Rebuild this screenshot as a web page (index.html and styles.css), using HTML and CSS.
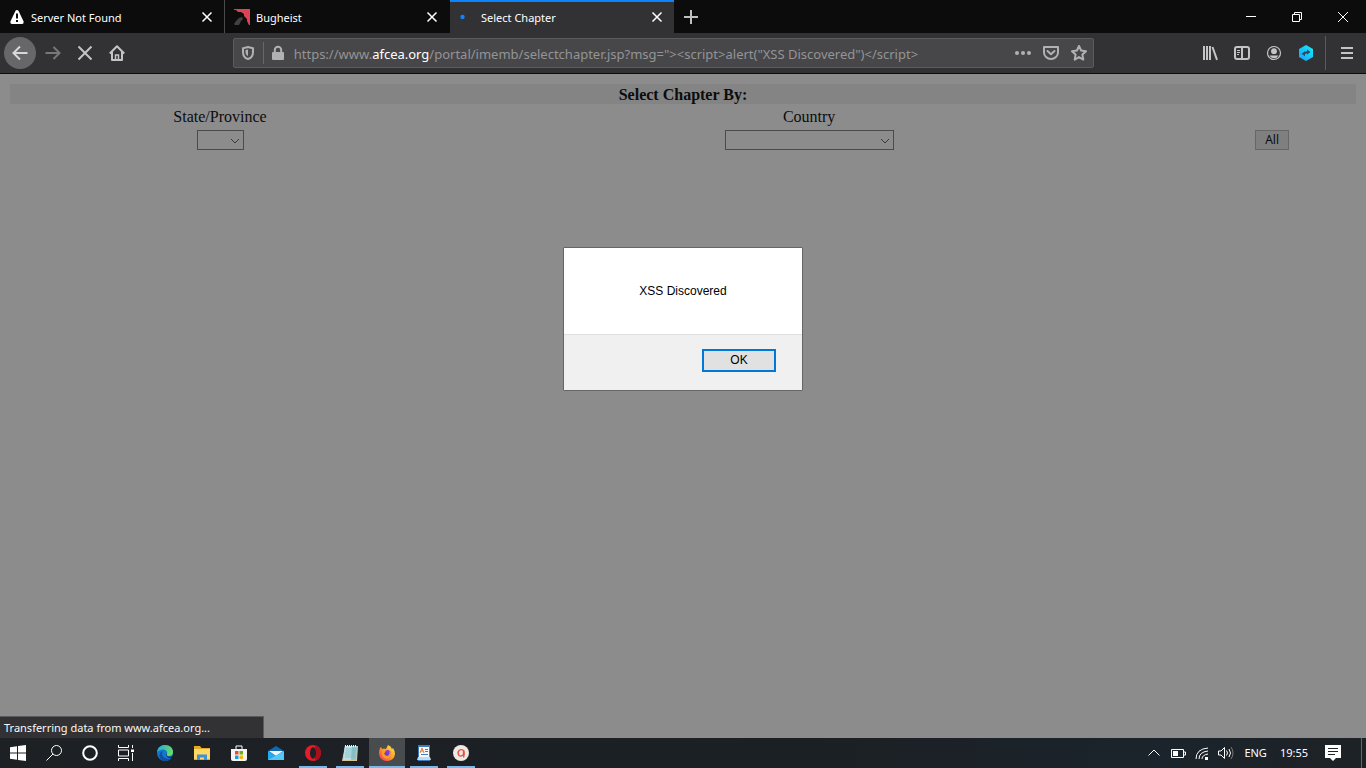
FILE: index.html
```
<!DOCTYPE html>
<html lang="en">
<head>
<meta charset="utf-8">
<title>Select Chapter</title>
<link rel="stylesheet" href="styles.css">
</head>
<body>
<header class="tabstrip">
  <div class="tab">
    <svg class="favicon" viewBox="0 0 16 16"><path d="M8 1 Q9 1 9.600 2 L14.600 12.500 Q15 15 13 15 H3 Q1 15 1.400 12.500 L6.400 2 Q7 1 8 1Z" fill="#fff"/><path d="M8 4.500v5M8 11v2" stroke="#0c0c0d" stroke-width="2"/></svg>
    <span class="tab-title">Server Not Found</span>
    <button class="tab-close" aria-label="Close tab"><svg viewBox="0 0 16 16"><path d="M3.500 3.500l9 9M12.500 3.500l-9 9"/></svg></button>
  </div>
  <div class="tab">
    <svg class="favicon" viewBox="0 0 16 16"><path d="M0 0H16V16H15L13 12V10L10 7V5L7 3H4L2 1H0Z" fill="#dc4455"/><path d="M0 15L2 12L5 9L8 8L9 10L7 12L5 16H1Z" fill="#414142"/></svg>
    <span class="tab-title">Bugheist</span>
    <button class="tab-close" aria-label="Close tab"><svg viewBox="0 0 16 16"><path d="M3.500 3.500l9 9M12.500 3.500l-9 9"/></svg></button>
  </div>
  <div class="tab tab-active">
    <svg class="favicon" viewBox="0 0 16 16"><circle cx="3.500" cy="8" r="2.200" fill="#0a84ff"/></svg>
    <span class="tab-title">Select Chapter</span>
    <button class="tab-close" aria-label="Close tab"><svg viewBox="0 0 16 16"><path d="M3.500 3.500l9 9M12.500 3.500l-9 9"/></svg></button>
  </div>
  <button class="new-tab" aria-label="New tab"><svg viewBox="0 0 16 16"><path d="M8 1v14M1 8h14"/></svg></button>
  <div class="window-controls">
    <button aria-label="Minimize"><svg viewBox="0 0 16 16"><path d="M3 7.500h10"/></svg></button>
    <button aria-label="Restore"><svg viewBox="0 0 16 16"><path d="M3.500 5.500h7v7h-7zM5.500 5.500v-2h7v7h-2"/></svg></button>
    <button aria-label="Close"><svg viewBox="0 0 16 16"><path d="M3 3l10 10M13 3L3 13"/></svg></button>
  </div>
</header>

<nav class="toolbar">
  <button class="tool back" aria-label="Back"><svg viewBox="0 0 16 16"><path d="M15.500 8H1.500M8 1.500L1.500 8L8 14.500"/></svg></button>
  <button class="tool dim" aria-label="Forward"><svg viewBox="0 0 16 16"><path d="M.500 8h14M8.500 2l6 6l-6 6"/></svg></button>
  <button class="tool" aria-label="Stop"><svg viewBox="0 0 16 16"><path d="M1.500 1.500l13 13M14.500 1.500l-13 13"/></svg></button>
  <button class="tool" aria-label="Home"><svg viewBox="0 0 16 16"><path d="M.800 8.500L8 1.200l7.200 7.300M3 7v8h10V7" stroke-linejoin="round"/><path d="M6.500 15v-5h3v5" stroke-width="1.500"/></svg></button>
  <div class="spring"></div>
  <div class="urlbar">
    <svg class="ico" viewBox="0 0 16 16"><path d="M8 2L13 3.200V7c0 4-2 6.300-5 7C5 13.300 3 11 3 7V3.200Z"/><path d="M8 4.500V11C6.500 10.500 5.500 9 5.500 7V5Z" fill="#b1b1b3" stroke="none"/></svg>
    <span class="url-divider"></span>
    <svg class="ico lock" viewBox="0 0 16 16"><path d="M4.800 7V5a3.200 3.200 0 0 1 6.400 0v2"/><rect x="2" y="7" width="12" height="8" rx="1" fill="#b1b1b3" stroke="none"/></svg>
    <div class="url">https://www.<b>afcea.org</b>/portal/imemb/selectchapter.jsp?msg="&gt;&lt;script&gt;alert("XSS Discovered")&lt;/script&gt;</div>
    <svg class="ico" viewBox="0 0 16 16"><g fill="#b1b1b3" stroke="none"><circle cx="2" cy="8" r="2"/><circle cx="8" cy="8" r="2"/><circle cx="14" cy="8" r="2"/></g></svg>
    <svg class="ico" viewBox="0 0 16 16"><path d="M1 2h14v5.500a7 6.500 0 0 1-14 0ZM4.500 6L8 9.300L11.500 6" stroke-linejoin="round" stroke-linecap="round"/></svg>
    <svg class="ico" viewBox="0 0 16 16"><path d="M8 1l2.100 4.500 4.900.700-3.600 3.400.900 5-4.300-2.500-4.300 2.500.900-5L1 6.200l4.900-.700Z" stroke-linejoin="round"/></svg>
  </div>
  <div class="spring"></div>
  <button class="tool" aria-label="Library"><svg viewBox="0 0 16 16"><path d="M2 1v14M5 1v14M8 1v14M10.500 2l4.500 12.800"/></svg></button>
  <button class="tool" aria-label="Sidebars"><svg viewBox="0 0 16 16"><rect x="1" y="2" width="14" height="12" rx="2"/><path d="M8 2v12"/><path d="M3 5.500h3M3 7.500h3M3 9.500h2" stroke-width="1"/></svg></button>
  <button class="tool" aria-label="Account"><svg viewBox="0 0 16 16"><circle cx="8" cy="8" r="6.500" stroke-width="1.200"/><circle cx="8" cy="6.200" r="2.900" fill="#c4c4c6" stroke="none"/><path d="M3.500 10.500h9Q11 13.300 8 13.300T3.500 10.500Z" fill="#c4c4c6" stroke="none"/></svg></button>
  <button class="tool" aria-label="Extension"><svg viewBox="0 0 16 16"><defs><linearGradient id="cy" x1="0" y1="1" x2="1" y2="0"><stop offset="0" stop-color="#1a9dff"/><stop offset="1" stop-color="#13f0f5"/></linearGradient></defs><path d="M8 0L15 4V12L8 16L1 12V4Z" fill="url(#cy)" stroke="none"/><path d="M3.500 8.800L7 6.200v5ZM9 4.500v5L12.500 7Z" fill="#34485a" stroke="none"/><path d="M6 8.300l4-1.300" stroke="#34485a"/></svg></button>
  <span class="menu-divider"></span>
  <button class="tool" aria-label="Menu"><svg viewBox="0 0 16 16"><path d="M2 3h12M2 8h12M2 13h12"/></svg></button>
</nav>

<main class="page">
  <form class="chapter-form">
    <table class="chapters">
      <colgroup><col class="col-state"><col class="col-country"><col></colgroup>
      <tr class="heading"><th colspan="3">Select Chapter By:</th></tr>
      <tr class="labels"><td><label for="state">State/Province</label></td><td><label for="country">Country</label></td><td></td></tr>
      <tr>
        <td><span class="picker picker-small"><select id="state"><option></option></select><svg viewBox="0 0 10 6"><path d="M1 1l4 4l4-4"/></svg></span></td>
        <td><span class="picker"><select id="country"><option></option></select><svg viewBox="0 0 10 6"><path d="M1 1l4 4l4-4"/></svg></span></td>
        <td><button type="button" class="all">All</button></td>
      </tr>
    </table>
  </form>
  <div class="modal-layer">
    <section class="dialog" role="alertdialog" aria-labelledby="message">
      <p id="message">XSS Discovered</p>
      <div class="dialog-actions"><button>OK</button></div>
    </section>
  </div>
  <div class="status">Transferring data from www.afcea.org...</div>
</main>

<footer class="taskbar">
  <div class="system">
    <button class="task" aria-label="Start"><svg viewBox="0 0 16 16"><path d="M0 2.300L7 1.300V7.600H0ZM8 1.100L16 0V7.600H8ZM0 8.500H7V14.800L0 13.800ZM8 8.500H16V16L8 15Z" fill="#fff"/></svg></button>
    <button class="task" aria-label="Search"><svg viewBox="0 0 16 16" class="line"><circle cx="10.500" cy="5.500" r="5"/><path d="M7 9L.500 15.500"/></svg></button>
    <button class="task" aria-label="Cortana"><svg viewBox="0 0 16 16"><circle cx="8" cy="8" r="6.800" fill="none" stroke="#fff" stroke-width="2"/></svg></button>
    <button class="task" aria-label="Task view"><svg viewBox="0 0 16 16" class="line"><path d="M.500 0v2.500h10V0M.500 16v-2.500h10V16M.500 5h10v6H.500ZM14.500 0v3M14.500 8v8"/><path d="M13 4.500h3v2.500h-3z" fill="#fff" stroke="none"/></svg></button>
  </div>
  <div class="apps">
    <button class="task" aria-label="Edge"><svg viewBox="0 0 16 16"><defs><linearGradient id="ed" x1="0" y1="0" x2="1" y2=".500"><stop offset="0" stop-color="#25a6e5"/><stop offset="1" stop-color="#65df62"/></linearGradient></defs><circle cx="8" cy="8" r="8" fill="#1177d1"/><path d="M0 7C1 2 4 0 8 0c5 0 8 3 8 7 0 3-2 4-4 4-3 0-2.500-1-2-2 1-3-2-5-5-4.500C3 5 1 6 0 7Z" fill="url(#ed)"/><path d="M6 6c-3 4 1 9 8 7.300C11 17 5 17 3 13 1.500 10 3 7 6 6Z" fill="#124f9f"/><path d="M10 8.500c-.700 2 0 3 2.500 3.300 1.500 0 3-.500 3.500-1.300L14.500 13C10 13 8 10 10 8.500Z" fill="#202427"/></svg></button>
    <button class="task" aria-label="File Explorer"><svg viewBox="0 0 16 16"><path d="M0 1h6l1.500 2H16v12H0Z" fill="#e9a823"/><path d="M0 4h16v10H0Z" fill="#ffd866"/><path d="M3 15V9.500h10V15h-3v-2.500H6V15Z" fill="#3c91d8"/></svg></button>
    <button class="task" aria-label="Store"><svg viewBox="0 0 16 16"><path d="M5 5V1h6v4" fill="none" stroke="#fff"/><path d="M0 4h16v10q0 2-2 2H2q-2 0-2-2Z" fill="#f4f4f4"/><path d="M4 6h3.500v3.500H4z" fill="#e85022"/><path d="M8.500 6H12v3.500H8.500z" fill="#72ad1e"/><path d="M4 10.500h3.500V14H4z" fill="#159fe3"/><path d="M8.500 10.500H12V14H8.500z" fill="#f5b614"/></svg></button>
    <button class="task" aria-label="Mail"><svg viewBox="0 0 16 16"><path d="M0 6L8 1l8 5v9H0Z" fill="#1068b1"/><path d="M1 6h14L8 11Z" fill="#f2f5fa"/><path d="M0 6l11 7-11 2Z" fill="#27a9ed"/><path d="M16 6L0 15h16Z" fill="#51c8fa"/></svg></button>
    <button class="task open" aria-label="Opera"><svg viewBox="0 0 16 16"><ellipse cx="8" cy="8" rx="8" ry="8" fill="#e51c2a"/><path d="M10 1c8 2 8 12 0 14Z" fill="#a60f1b"/><ellipse cx="8" cy="8" rx="3" ry="5.800" fill="#1e2225"/></svg></button>
    <button class="task open" aria-label="Notepad"><svg viewBox="0 0 16 16"><path d="M3 1h13l-1 15H0Z" fill="#d6c59b"/><path d="M3 1h12l-1 14H1Z" fill="#8ec5cd"/><path d="M3 1h7L9 15H1Z" fill="#b9dfe3"/><path d="M4 4h10M4 6h10M3 8h10M3 10h10M3 12h10" stroke="#67aab7" stroke-width=".500"/><path d="M3 1h12" stroke="#f4f4f4" stroke-width="2" stroke-dasharray="1 1"/></svg></button>
    <button class="task open current" aria-label="Firefox"><svg viewBox="0 0 16 16"><defs><linearGradient id="ff" x1="1" y1="0" x2="0" y2="1"><stop offset="0" stop-color="#fff24a"/><stop offset=".500" stop-color="#ff9b22"/><stop offset="1" stop-color="#f52860"/></linearGradient></defs><path d="M1 3l1-1 1 2q2-1 4 0L9 0q3 1 4 4l1-1q2 3 2 6-1 7-8 7T0 9Q0 5 1 3Z" fill="url(#ff)"/><circle cx="8" cy="9" r="4" fill="#8041d5"/><path d="M3 5q3-1 5 1 0 2-3 2 1 3 4 2 2-1 1-4 4 3 1 6-3 3-7 0-2-3-1-7Z" fill="#ff9b25"/><circle cx="8" cy="8.500" r="2.400" fill="#7440cf"/></svg></button>
    <button class="task open" aria-label="WordPad"><svg viewBox="0 0 16 16"><path d="M2 0h12v16H2Z" fill="#3d78bd"/><path d="M3 2h10v10H3Z" fill="#f4f8fd"/><path d="M4 8l2-5 2 5M5 6h2" fill="none" stroke="#e77a28"/><path d="M9 4.500h3M9 6.500h3M5 9.500h7" stroke="#437dbd"/><path d="M2 12h12l1 3H1Z" fill="#bddbf3"/></svg></button>
    <button class="task open" aria-label="Recorder"><svg viewBox="0 0 16 16"><circle cx="8" cy="8" r="8" fill="#ece9e5"/><path d="M10.500 9.500Q8 12 6 10.500 4 8 6 5.500 9 3.500 11 6q.800 3-.500 6.500M10.500 5v5" fill="none" stroke="#e94c3e" stroke-width="1.300"/></svg></button>
  </div>
  <div class="tray">
    <svg viewBox="0 0 16 16" class="line"><path d="M2.500 10.500L8 5l5.500 5.500"/></svg>
    <svg viewBox="0 0 16 16" class="line"><path d="M1.500 4.500h12v8h-12ZM14 7h1.500v3H14"/><path d="M3 6h5v5H3Z" fill="#fff" stroke="none"/></svg>
    <svg viewBox="0 0 16 16" class="line"><path d="M2 14Q2 4 14 3M5 14Q5 7 14 6M8 14Q8 10 14 9"/><path d="M11 12h3v3h-3z" fill="#fff" stroke="none"/></svg>
    <svg viewBox="0 0 16 16" class="line"><path d="M.500 6H3l3.500-3.500v11L3 10H.500ZM8.500 5.500q2 2.500 0 5M11 4q3 4 0 8"/><path d="M13 2q4 6 0 12" stroke="#777"/></svg>
    <span>ENG</span>
    <time>19:55</time>
    <svg viewBox="0 0 16 16" class="notice"><path d="M0 0h16v13H11l-3 3-3-3H0Z" fill="#fff"/><path d="M3 3.500h10M3 6.500h10M3 9.500h7" stroke="#202427"/></svg>
  </div>
</footer>
</body>
</html>
```
FILE: styles.css
```
* { box-sizing: border-box; }
body {
  margin: 0;
  height: 100vh;
  display: flex;
  flex-direction: column;
  overflow: hidden;
  font: 11px/16px "Noto Sans", "Open Sans", sans-serif;
  color: #fff;
  background: #8c8c8c;
}
button { font: inherit; color: inherit; border: 0; padding: 0; background: none; }
svg { display: block; flex: none; width: 16px; height: 16px; }

.tabstrip { display: flex; flex: none; height: 33px; background: #0c0c0d; }
.tab {
  display: flex;
  align-items: center;
  gap: 6px;
  width: 225px;
  padding: 1px 9px 0 9px;
  border-right: 1px solid #4a4a4b;
}
.tab:nth-child(2) { border-right-color: #0c0c0d; }
.tab-active { width: 224px; background: #323234; border-right: 0; box-shadow: inset 0 2px #0a84ff; }
.tab-title { flex: 1; padding-top: 1px; }
.tab-close path { stroke: #fff; stroke-width: 1.500; }
.new-tab { width: 34px; display: grid; place-items: center; }
.new-tab path { stroke: #c0c0c1; stroke-width: 2; }
.window-controls { display: flex; margin-left: auto; }
.window-controls button { width: 46px; display: grid; place-items: center; }
.window-controls path { fill: none; stroke: #fff; }

.toolbar {
  display: flex;
  flex: none;
  align-items: center;
  height: 41px;
  padding: 0 3px 0 4px;
  background: #323234;
  border-bottom: 1px solid #0c0c0d;
}
.tool { flex: none; width: 32px; height: 32px; display: grid; place-items: center; }
.tool svg, .ico { fill: none; stroke: #c4c4c6; stroke-width: 2; }
.back { border-radius: 50%; background: #67676a; margin-right: 1px; }
.back svg { stroke: #d8d8d9; }
.dim svg { stroke: #77777a; }
.spring { flex: 2; }
.urlbar {
  flex: 17;
  display: flex;
  align-items: center;
  gap: 12px;
  height: 30px;
  padding: 0 6px;
  background: #474749;
  border: 1px solid #5b5b5d;
  border-radius: 2px;
}
.ico { stroke: #b1b1b3; }
.url-divider { width: 1px; height: 22px; background: #67676a; margin: 0 -6px 0 -5px; }
.lock { margin-right: -4px; }
.url { flex: 1; min-width: 0; padding-top: 2px; font-size: 13px; line-height: 20px; white-space: nowrap; overflow: hidden; color: #949496; }
.url b { font-weight: 400; color: #fff; }
.menu-divider { width: 1px; height: 34px; margin: 0 5px 0 3px; background: #5b5b5d; }

.page { position: relative; flex: 1; min-height: 0; padding: 8px; color: #0c0c0c; }
.chapters {
  width: 100%;
  border-collapse: separate;
  border-spacing: 2px;
  table-layout: fixed;
  text-align: center;
  font: 16px/18px "Liberation Serif", serif;
}
.chapters th, .chapters td { padding: 1px; }
.chapters .heading th, .chapters .labels td { padding: 2px 1px 0; }
.heading { background: #848484; }
.col-state { width: 31.3%; }
.col-country { width: 56.2%; }
.picker { position: relative; display: block; width: 169px; height: 20px; margin: 1px auto; }
.picker-small { width: 47px; }
.picker select {
  display: block;
  width: 100%;
  height: 100%;
  appearance: none;
  border: 1px solid #4b4b4b;
  border-radius: 0;
  background: #8c8c8c;
}
.picker svg { position: absolute; right: 4px; top: 8px; width: 10px; height: 6px; fill: none; stroke: #3a3a3a; pointer-events: none; }
.all {
  display: block;
  width: 34px;
  height: 20px;
  margin: 1px auto;
  border: 1px solid #666;
  background: #7f7f7f;
  font: 12px/18px "Noto Sans", sans-serif;
}

.modal-layer { position: absolute; inset: 0; display: flex; justify-content: center; align-items: flex-start; padding-top: 173px; }
.dialog {
  width: 240px;
  border: 1px solid #666;
  border-radius: 1px;
  background: #fff;
  color: #000;
  font: 12px/16px "Liberation Sans", Arial, sans-serif;
}
.dialog p { margin: 0; padding: 35px 20px; text-align: center; }
.dialog-actions { display: flex; justify-content: flex-end; padding: 14px 26px 18px; border-top: 1px solid #dfdfdf; background: #f0f0f0; }
.dialog-actions button { width: 74px; height: 23px; padding-bottom: 2px; border: 2px solid #0078d7; background: #e1e1e1; }

.status {
  position: absolute;
  left: 0;
  bottom: 0;
  width: 264px;
  padding: 3px 4px 2px;
  border-top: 1px solid #5b5b5d;
  border-right: 1px solid #5b5b5d;
  background: #323234;
  color: #f9f9fa;
}

.taskbar { display: flex; flex: none; height: 30px; background: linear-gradient(90deg, #1d2124, #1b2024 60%, #1b242c 85%, #1d2225); }
.system, .apps { display: flex; }
.apps { gap: 1px; margin-left: 3px; }
.task { width: 36px; display: grid; place-items: center; }
.line { fill: none; stroke: #fff; stroke-width: 1; }
.open { background: linear-gradient(#76b9ed, #76b9ed) bottom / 28px 2px no-repeat; }
.current { background: linear-gradient(#76b9ed, #76b9ed) bottom / 36px 2px no-repeat #484c4f; }
.tray { display: flex; align-items: center; gap: 8px; margin: 0 4px 0 auto; padding-right: 20px; border-right: 1px solid #62666a; }
.tray span { margin-left: 2px; }
.tray time { margin: 0 9px 0 5px; }
```
